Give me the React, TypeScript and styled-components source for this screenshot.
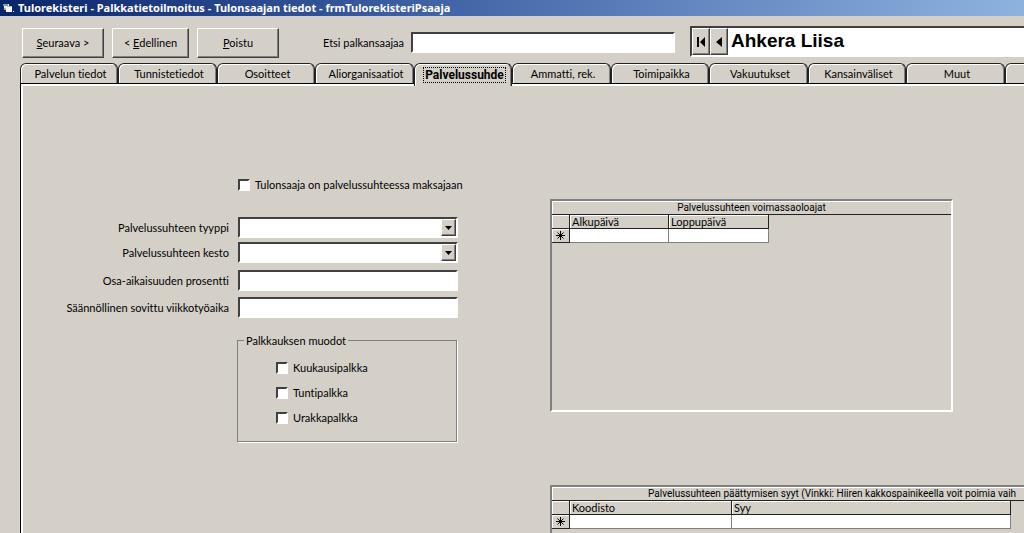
import React, { useState } from "react";
import styled, { createGlobalStyle, css } from "styled-components";

const face = "#d4d0c8";
const shadow = "#808080";
const dark = "#404040";

const GlobalStyle = createGlobalStyle`
  *, *::before, *::after { box-sizing: border-box; }
  body {
    margin: 0;
    background: ${face};
    color: #000;
    font: 11px/13px Lato, "Liberation Sans", sans-serif;
    font-variant-ligatures: none;
  }
  button, input, select { font: inherit; color: inherit; font-variant-ligatures: none; }
`;

const raised = css`
  border: 1px solid;
  border-color: #fff ${dark} ${dark} #fff;
  box-shadow: inset -1px -1px 0 ${shadow};
  background: ${face};
`;

const sunken = css`
  border: 2px solid;
  border-color: ${dark} #fff #fff ${dark};
  border-radius: 0;
  background: #fff;
`;

const Window = styled.div`
  display: flex;
  flex-direction: column;
  height: 100vh;
  overflow: hidden;
`;

const TitleBar = styled.header`
  display: flex;
  flex: none;
  align-items: center;
  gap: 3px;
  height: 16px;
  padding-left: 2px;
  background: linear-gradient(90deg, #0a246a, #3d5fa3 40%, #5f83bd 65%, #8fb3df);
  color: #fff;
`;

const Title = styled.h1`
  margin: 0;
  font: bold 11px/16px "Noto Sans", sans-serif;
  white-space: nowrap;
`;

const Toolbar = styled.div`
  display: flex;
  flex: none;
  align-items: center;
  height: 47px;
  padding: 6px 0 0 22px;
`;

const Buttons = styled.div`
  display: flex;
  gap: 8px;
`;

const PushButton = styled.button<{ $narrow?: boolean }>`
  ${raised}
  width: ${(p) => (p.$narrow ? 77 : 82)}px;
  height: 30px;
  padding: 0;
`;

const Search = styled.label`
  display: grid;
  grid-template-columns: 125px 264px;
  align-items: center;
  gap: 7px;
  text-align: right;
  white-space: nowrap;
`;

const TextBox = styled.input`
  ${sunken}
  width: 100%;
  height: 21px;
  padding: 0 3px;
  outline: none;
`;

const Navigator = styled.div`
  display: flex;
  flex: 1;
  min-width: 0;
  height: 31px;
  margin: 0 0 2px 15px;
  border: 2px solid;
  border-color: ${dark} #fff #fff ${dark};
  border-right: 0;
  background: #fff;
`;

const NavButton = styled.button`
  ${raised}
  border-right-color: ${dark};
  display: grid;
  place-items: center;
  width: 18px;
  padding: 0;
`;

const PersonName = styled.output`
  padding-left: 3px;
  font: bold 19px/26px "Liberation Sans", sans-serif;
  white-space: nowrap;
`;

const TabList = styled.div`
  display: flex;
  flex: none;
  height: 20px;
  padding-left: 20px;
`;

const Tab = styled.button<{ $active: boolean }>`
  flex: none;
  width: 98px;
  height: 20px;
  padding: 0 0 1px 3px;
  border: 1px solid #222;
  border-bottom: 0;
  border-radius: 6px 6px 0 0;
  background: ${face};
  box-shadow: inset 1px 1px 0 #fff, inset -1px 0 0 ${shadow};
  white-space: nowrap;
  outline: none;
  &:nth-child(even) { width: 99px; }
  ${(p) =>
    p.$active &&
    css`
      position: relative;
      height: 23px;
      padding: 1px 0 0 3px;
      font: bold 12px/13px Roboto, sans-serif;
    `}
`;

const Focus = styled.span<{ $active: boolean }>`
  padding: 0 1px;
  outline: ${(p) => (p.$active ? "1px dotted #000" : "none")};
`;

const Panel = styled.main`
  display: grid;
  grid-template-columns: 438px minmax(0, 1fr);
  column-gap: 91px;
  flex: 1;
  min-height: 0;
  margin-left: 20px;
  border: solid #000;
  border-width: 1px 0 0 1px;
  box-shadow: inset 2px 2px 0 #fff;
`;

const Form = styled.form`
  padding: 94px 0 0 1px;
`;

const Check = styled.label`
  display: flex;
  align-items: center;
  gap: 5px;
  height: 13px;
  white-space: nowrap;
`;

const CheckBox = styled.input.attrs({ type: "checkbox" })`
  ${sunken}
  flex: none;
  appearance: none;
  width: 12px;
  height: 12px;
  margin: 0;
  &:checked { background: #000; background-clip: content-box; padding: 2px; }
`;

const LeadCheck = styled.div`
  padding-left: 216px;
  margin-bottom: 26px;
`;

const Fields = styled.div<{ $gap: number }>`
  display: grid;
  gap: ${(p) => p.$gap}px;
  margin-bottom: 7px;
`;

const Field = styled.div`
  display: grid;
  grid-template-columns: 207px 220px;
  column-gap: 9px;
  align-items: center;
  text-align: right;
  white-space: nowrap;
`;

const ComboWrap = styled.div`
  position: relative;
`;

const Combo = styled.select`
  ${sunken}
  appearance: none;
  display: block;
  width: 100%;
  height: 21px;
  padding: 0 20px 0 3px;
  outline: none;
`;

const ComboArrow = styled.span`
  ${raised}
  position: absolute;
  top: 2px;
  right: 2px;
  bottom: 2px;
  display: grid;
  place-items: center;
  width: 15px;
  pointer-events: none;
`;

const Group = styled.fieldset`
  width: 220px;
  height: 108px;
  margin: 16px 0 0 215px;
  padding: 14px 0 0 38px;
  border: 1px solid ${shadow};
  box-shadow: 1px 1px 0 #fff;
`;

const Legend = styled.legend`
  margin-left: -32px;
  padding: 0 2px;
`;

const Options = styled.div`
  display: grid;
  gap: 12px;
`;

const Tables = styled.div`
  display: flex;
  flex-direction: column;
  gap: 73px;
  min-height: 0;
  padding-top: 115px;
`;

const GridBox = styled.section<{ $fill?: boolean }>`
  border: solid;
  border-width: 2px;
  border-color: ${shadow} #fff #fff ${shadow};
  ${(p) =>
    p.$fill
      ? css`
          flex: 1;
          border-right: 0;
          border-bottom: 0;
          min-height: 0;
          overflow: hidden;
        `
      : css`
          flex: none;
          max-width: 403px;
          height: 213px;
        `}
`;

const GridCaption = styled.h2<{ $indent?: boolean }>`
  height: 14px;
  margin: 0;
  padding-left: ${(p) => (p.$indent ? 96 : 0)}px;
  overflow: hidden;
  border-bottom: 1px solid #222;
  box-shadow: inset 1px 1px 0 #fff;
  font: 10px/14px Roboto, sans-serif;
  text-align: ${(p) => (p.$indent ? "left" : "center")};
  white-space: nowrap;
`;

const DataTable = styled.table`
  table-layout: fixed;
  width: 0;
  border-collapse: separate;
  border-spacing: 0;
  th, td {
    height: 14px;
    padding: 0 0 0 2px;
    font-weight: normal;
    line-height: 13px;
    text-align: left;
  }
  th {
    border: solid #222;
    border-width: 0 1px 1px 0;
    background: ${face};
    box-shadow: inset 1px 1px 0 #fff;
  }
  tbody th { padding: 0 0 0 3px; }
  td {
    border: solid ${shadow};
    border-width: 0 1px 1px 0;
    background: #fff;
  }
`;

const Star = styled.svg`
  display: block;
`;

const Col = styled.col<{ $w: number }>`
  width: ${(p) => p.$w}px;
`;

function FormIcon() {
  return (
    <svg width="13" height="14" viewBox="0 0 13 14" aria-hidden="true">
      <path d="M2 3h5v5H2z" fill="#e8f4ee" />
      <path d="M1 3h5v2H1z" fill="#5fb0a0" />
      <path d="M4 5h6v6H4z" fill="#fff" />
      <path d="M5 5h5v1H5z" fill="#9fd0c8" />
      <path d="M2 7h2v2H2z" fill="#c9b36a" />
      <path d="M11 10h1v1h-1z" fill="#fff" />
    </svg>
  );
}

interface GridProps {
  id: string;
  title: string;
  columns: { name: string; width: number }[];
  fill?: boolean;
}

function DataGrid({ id, title, columns, fill }: GridProps) {
  return (
    <GridBox $fill={fill}>
      <GridCaption id={id} $indent={fill}>{title}</GridCaption>
      <DataTable aria-labelledby={id}>
        <colgroup>
          <Col $w={18} />
          {columns.map((c) => <Col key={c.name} $w={c.width} />)}
        </colgroup>
        <thead>
          <tr>
            <th />
            {columns.map((c) => <th key={c.name} scope="col">{c.name}</th>)}
          </tr>
        </thead>
        <tbody>
          <tr>
            <th scope="row" aria-label="*">
              <Star width="11" height="11" viewBox="0 0 11 11" aria-hidden="true">
                <path d="M5.5 1v9M1 5.5h9M2.5 2.5l6 6M8.500 2.500l-6 6" stroke="#000" fill="none" />
              </Star>
            </th>
            {columns.map((c) => <td key={c.name} />)}
          </tr>
        </tbody>
      </DataTable>
    </GridBox>
  );
}

const tabs = [
  "Palvelun tiedot", "Tunnistetiedot", "Osoitteet", "Aliorganisaatiot",
  "Palvelussuhde", "Ammatti, rek.", "Toimipaikka", "Vakuutukset",
  "Kansainväliset", "Muut", "",
];

export default function App() {
  const [active, setActive] = useState(4);
  return (
    <Window>
      <GlobalStyle />
      <TitleBar>
        <FormIcon />
        <Title>Tulorekisteri - Palkkatietoilmoitus - Tulonsaajan tiedot - frmTulorekisteriPsaaja</Title>
      </TitleBar>
      <Toolbar>
        <Buttons>
          <PushButton type="button"><u>S</u>euraava &gt;</PushButton>
          <PushButton type="button" $narrow>&lt; <u>E</u>dellinen</PushButton>
          <PushButton type="button"><u>P</u>oistu</PushButton>
        </Buttons>
        <Search>
          Etsi palkansaajaa
          <TextBox type="text" />
        </Search>
        <Navigator>
          <NavButton type="button" aria-label="Ensimmäinen">
            <svg width="10" height="10" viewBox="0 0 10 10"><path d="M1 0h2v10H1zM9 0v10L4 5z" /></svg>
          </NavButton>
          <NavButton type="button" aria-label="Edellinen">
            <svg width="6" height="10" viewBox="0 0 6 10"><path d="M6 0v10L0 5z" /></svg>
          </NavButton>
          <PersonName>Ahkera Liisa</PersonName>
        </Navigator>
      </Toolbar>
      <TabList role="tablist">
        {tabs.map((name, i) => (
          <Tab key={i} type="button" role="tab" aria-selected={i === active} $active={i === active} onClick={() => setActive(i)}>
            <Focus $active={i === active}>{name}</Focus>
          </Tab>
        ))}
      </TabList>
      <Panel>
        <Form>
          <LeadCheck>
            <Check><CheckBox />Tulonsaaja on palvelussuhteessa maksajaan</Check>
          </LeadCheck>
          <Fields $gap={4}>
            {["Palvelussuhteen tyyppi", "Palvelussuhteen kesto"].map((name, i) => (
              <Field key={name}>
                <label htmlFor={`combo${i}`}>{name}</label>
                <ComboWrap>
                  <Combo id={`combo${i}`}><option value="" /></Combo>
                  <ComboArrow>
                    <svg width="7" height="4" viewBox="0 0 7 4"><path d="M0 0h7L3.500 4z" /></svg>
                  </ComboArrow>
                </ComboWrap>
              </Field>
            ))}
          </Fields>
          <Fields $gap={6}>
            {["Osa-aikaisuuden prosentti", "Säännöllinen sovittu viikkotyöaika"].map((name, i) => (
              <Field key={name}>
                <label htmlFor={`text${i}`}>{name}</label>
                <TextBox id={`text${i}`} type="text" />
              </Field>
            ))}
          </Fields>
          <Group>
            <Legend>Palkkauksen muodot</Legend>
            <Options>
              {["Kuukausipalkka", "Tuntipalkka", "Urakkapalkka"].map((name) => (
                <Check key={name}><CheckBox />{name}</Check>
              ))}
            </Options>
          </Group>
        </Form>
        <Tables>
          <DataGrid
            id="validity"
            title="Palvelussuhteen voimassaoloajat"
            columns={[{ name: "Alkupäivä", width: 99 }, { name: "Loppupäivä", width: 100 }]}
          />
          <DataGrid
            id="reasons"
            fill
            title="Palvelussuhteen päättymisen syyt (Vinkki: Hiiren kakkospainikeella voit poimia vaih"
            columns={[{ name: "Koodisto", width: 162 }, { name: "Syy", width: 279 }]}
          />
        </Tables>
      </Panel>
    </Window>
  );
}
